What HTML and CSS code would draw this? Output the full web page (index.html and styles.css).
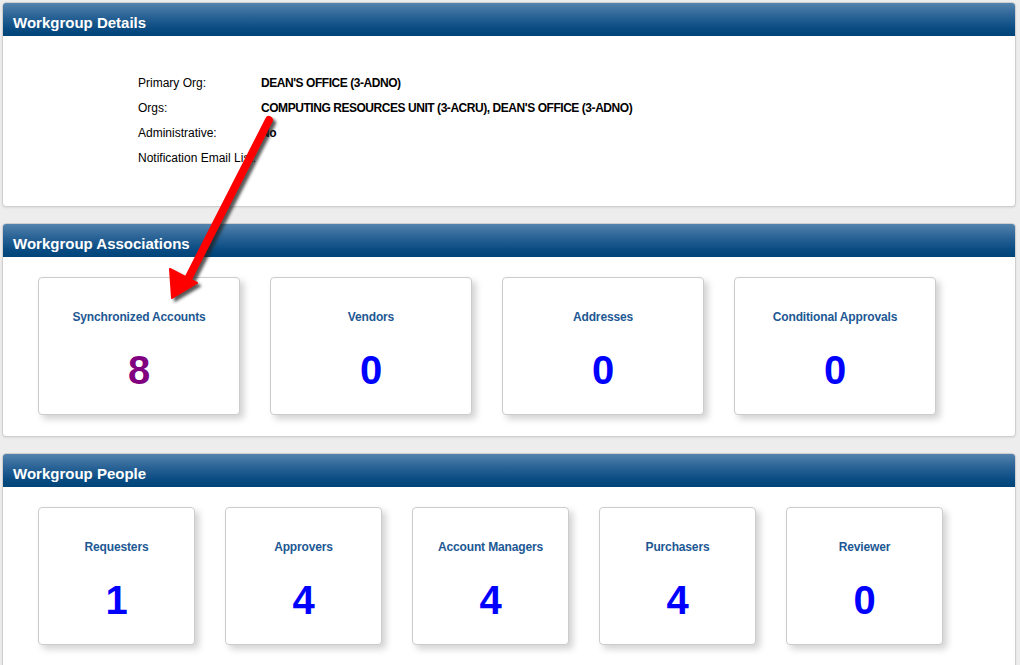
FILE: index.html
```html
<!DOCTYPE html>
<html>
<head>
<meta charset="utf-8">
<title>Workgroup</title>
<link rel="stylesheet" href="styles.css">
</head>
<body>
<div class="page">
  <section class="panel">
    <h2 class="panel-head">Workgroup Details</h2>
    <div class="details">
      <table class="details-table">
        <tr><td class="lbl">Primary Org:</td><td class="val">DEAN'S OFFICE (3-ADNO)</td></tr>
        <tr><td class="lbl">Orgs:</td><td class="val">COMPUTING RESOURCES UNIT (3-ACRU), DEAN'S OFFICE (3-ADNO)</td></tr>
        <tr><td class="lbl">Administrative:</td><td class="val">No</td></tr>
        <tr><td class="lbl">Notification Email List:</td><td class="val"></td></tr>
      </table>
    </div>
  </section>

  <section class="panel">
    <h2 class="panel-head">Workgroup Associations</h2>
    <div class="tiles">
      <a class="tile wide"><span class="tile-title">Synchronized Accounts</span><span class="tile-num visited">8</span></a>
      <a class="tile wide"><span class="tile-title">Vendors</span><span class="tile-num">0</span></a>
      <a class="tile wide"><span class="tile-title">Addresses</span><span class="tile-num">0</span></a>
      <a class="tile wide"><span class="tile-title">Conditional Approvals</span><span class="tile-num">0</span></a>
    </div>
  </section>

  <section class="panel">
    <h2 class="panel-head">Workgroup People</h2>
    <div class="tiles tiles-last">
      <a class="tile narrow"><span class="tile-title">Requesters</span><span class="tile-num">1</span></a>
      <a class="tile narrow"><span class="tile-title">Approvers</span><span class="tile-num">4</span></a>
      <a class="tile narrow"><span class="tile-title">Account Managers</span><span class="tile-num">4</span></a>
      <a class="tile narrow"><span class="tile-title">Purchasers</span><span class="tile-num">4</span></a>
      <a class="tile narrow"><span class="tile-title">Reviewer</span><span class="tile-num">0</span></a>
    </div>
  </section>
</div>

<svg class="arrow" width="1020" height="665" viewBox="0 0 1020 665" xmlns="http://www.w3.org/2000/svg">
  <defs>
    <filter id="sh" x="-20%" y="-20%" width="140%" height="140%">
      <feGaussianBlur stdDeviation="1.6"/>
    </filter>
  </defs>
  <g transform="translate(3,3)" fill="#222" stroke="#222" opacity="0.75" filter="url(#sh)">
    <line x1="269" y1="120" x2="187" y2="281" stroke-width="8" stroke-linecap="round"/>
    <polygon points="172,298 170,269 197,283" stroke-width="2" stroke-linejoin="round"/>
  </g>
  <g fill="#ff0000" stroke="#ff0000">
    <line x1="269" y1="120" x2="187" y2="281" stroke-width="8" stroke-linecap="round"/>
    <polygon points="172,298 170,269 197,283" stroke-width="2" stroke-linejoin="round"/>
  </g>
</svg>
</body>
</html>
```

FILE: styles.css
```css
html, body {
  margin: 0;
  padding: 0;
  background: #ededed;
  font-family: "Liberation Sans", Arial, sans-serif;
  overflow: hidden;
}

.page {
  padding: 2px 4px 0 2px;
  display: flex;
  flex-direction: column;
  gap: 16px;
}

.panel {
  background: #fff;
  border: 1px solid #cfcfcf;
  border-radius: 4px;
  overflow: hidden;
  box-shadow: 0 1px 2px rgba(0,0,0,0.08);
}

.panel-head {
  margin: 0;
  height: 33px;
  line-height: 40px;
  padding-left: 10px;
  font-size: 15px;
  font-weight: bold;
  color: #fff;
  background: linear-gradient(to bottom, #5283ad 0%, #2a6396 40%, #0b4d83 75%, #004478 100%);
}

.details {
  padding: 34px 0 36px 135px;
}

.details-table {
  border-collapse: collapse;
  font-size: 12px;
  color: #000;
}

.details-table td {
  padding: 0;
  height: 25px;
  vertical-align: middle;
}

.details-table .lbl {
  width: 123px;
  white-space: nowrap;
}

.details-table .val {
  font-weight: bold;
  letter-spacing: -0.45px;
}

.tiles {
  display: flex;
  gap: 30px;
  padding: 20px 0 21px 35px;
}

.tiles-last {
  padding-bottom: 40px;
}

.tile {
  box-sizing: border-box;
  height: 138px;
  border: 1px solid #cccccc;
  border-radius: 4px;
  background: #fff;
  box-shadow: 4px 4px 7px rgba(0,0,0,0.18);
  display: flex;
  flex-direction: column;
  align-items: center;
  cursor: pointer;
}

.tile.wide { width: 202px; }
.tile.narrow { width: 157px; }

.tile-title {
  margin-top: 32px;
  font-size: 12px;
  line-height: 14px;
  font-weight: bold;
  color: #1d5894;
  letter-spacing: -0.15px;
}

.tile-num {
  margin-top: 26px;
  font-size: 40px;
  line-height: 40px;
  font-weight: bold;
  color: #0000ff;
}

.tile-num.visited { color: #800080; }

.arrow {
  position: absolute;
  left: 0;
  top: 0;
  pointer-events: none;
}
```
